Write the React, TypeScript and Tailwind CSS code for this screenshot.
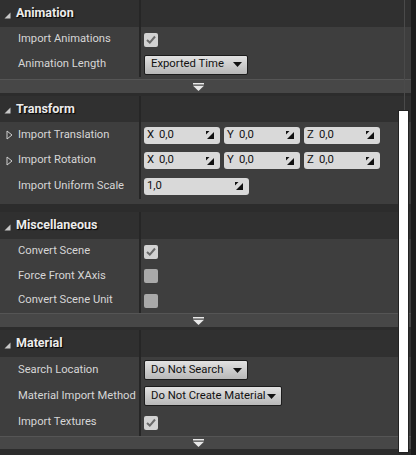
import React from "react";

const FONT = { fontFamily: "Roboto, 'Noto Sans', sans-serif" };

function HeaderTri() {
  return (
    <svg width="7" height="7" viewBox="0 0 7 7" className="shrink-0">
      <polygon points="6.5,0.5 6.5,6.5 0.5,6.5" fill="#c8c8c8" />
    </svg>
  );
}

function HollowTri() {
  return (
    <svg width="7" height="10" viewBox="0 0 7 10" className="shrink-0">
      <polygon points="1,1 6,5 1,9" fill="none" stroke="#cfcfcf" strokeWidth="1" />
    </svg>
  );
}

function DownTri({ color = "#111" }: { color?: string }) {
  return (
    <svg width="9" height="5" viewBox="0 0 9 5" className="shrink-0">
      <polygon points="0,0 9,0 4.5,5" fill={color} />
    </svg>
  );
}

function AdvArrow() {
  return (
    <svg width="11" height="8" viewBox="0 0 11 8">
      <rect x="0" y="0" width="11" height="1.5" fill="#e8e8e8" />
      <polygon points="0,2.8 11,2.8 5.5,8" fill="#e8e8e8" />
    </svg>
  );
}

function Spin() {
  return (
    <svg width="8" height="8" viewBox="0 0 8 8" className="shrink-0">
      <polygon points="8,1 8,8 1,8" fill="#111" />
      <polygon points="0,0 3.5,0 0,3.5" fill="#111" />
    </svg>
  );
}

function Check({ checked }: { checked: boolean }) {
  return (
    <div
      className={
        "w-[14px] h-[14px] rounded-[2px] flex items-center justify-center " +
        (checked ? "bg-[#d2d2d2]" : "bg-[#a9a9a9]")
      }
    >
      {checked && (
        <svg width="10" height="9" viewBox="0 0 10 9">
          <path d="M1 5 L3.8 7.6 L9 1.5" fill="none" stroke="#6a6a6a" strokeWidth="2" />
        </svg>
      )}
    </div>
  );
}

function Dropdown({ text, w }: { text: string; w: string }) {
  return (
    <div
      className={
        w +
        " h-[20px] rounded-[2px] border border-[#1c1c1c] bg-gradient-to-b from-[#e2e2e2] to-[#b8b8b8] flex items-center pl-[6px] pr-[5px] justify-between text-[11.3px] text-[#111]"
      }
    >
      <span className="whitespace-nowrap">{text}</span>
      <DownTri />
    </div>
  );
}

function NumBox({ axis, value, w }: { axis?: string; value: string; w: string }) {
  return (
    <div
      className={
        w +
        " h-[17px] rounded-[3px] bg-[#d9d9d9] flex items-center pl-[3px] pr-[6px] text-[11.3px] text-[#111]"
      }
    >
      {axis && <span className="w-[12px]">{axis}</span>}
      <span className="flex-1">{value}</span>
      <Spin />
    </div>
  );
}

function Header({ title, h }: { title: string; h: string }) {
  return (
    <div className={h + " flex bg-[#303030]"}>
      <div className="w-[141px] border-r-2 border-[#262626] flex items-center pl-[4px] gap-[5px]">
        <div className="pt-[3px]">
          <HeaderTri />
        </div>
        <span
          className="text-[12.5px] font-bold text-[#ececec]"
          style={{ textShadow: "1px 1px 1px #000" }}
        >
          {title}
        </span>
      </div>
      <div className="flex-1" />
    </div>
  );
}

function Row({
  label,
  h,
  expand,
  children,
}: {
  label: string;
  h: string;
  expand?: boolean;
  children?: React.ReactNode;
}) {
  return (
    <div className={h + " flex"}>
      <div className="w-[141px] border-r-2 border-[#262626] flex items-center text-[11.2px] text-[#d6d6d6]">
        <div className="w-[18px] flex justify-center pl-[1px]">{expand && <HollowTri />}</div>
        <span className="whitespace-nowrap">{label}</span>
      </div>
      <div className="flex-1 flex items-center pl-[3px] gap-[4px]">{children}</div>
    </div>
  );
}

function Advanced({ h }: { h: string }) {
  return (
    <div className={h + " bg-[#474747] border-t border-[#555] flex items-center justify-center pr-[14px]"}>
      <AdvArrow />
    </div>
  );
}

export default function App() {
  return (
    <div className="w-[416px] h-[455px] bg-[#2c2c2c] overflow-hidden relative flex" style={FONT}>
      <div className="w-[411px] flex flex-col">
        {/* Animation */}
        <Header title="Animation" h="h-[27px]" />
        <div className="bg-[#3e3e3e] pb-[2px]">
          <Row label="Import Animations" h="h-[25px]">
            <Check checked />
          </Row>
          <Row label="Animation Length" h="h-[25px]">
            <Dropdown text="Exported Time" w="w-[104px]" />
          </Row>
        </div>
        <Advanced h="h-[14px]" />
        <div className="h-[3px]" />

        {/* Transform */}
        <Header title="Transform" h="h-[26px]" />
        <div className="bg-[#3e3e3e] pb-[5px]">
          <Row label="Import Translation" h="h-[26px]" expand>
            <NumBox axis="X" value="0,0" w="w-[76px]" />
            <NumBox axis="Y" value="0,0" w="w-[76px]" />
            <NumBox axis="Z" value="0,0" w="w-[76px]" />
          </Row>
          <Row label="Import Rotation" h="h-[25px]" expand>
            <NumBox axis="X" value="0,0" w="w-[76px]" />
            <NumBox axis="Y" value="0,0" w="w-[76px]" />
            <NumBox axis="Z" value="0,0" w="w-[76px]" />
          </Row>
          <Row label="Import Uniform Scale" h="h-[26px]">
            <NumBox value="1,0" w="w-[105px]" />
          </Row>
        </div>
        <div className="h-[8px]" />

        {/* Miscellaneous */}
        <Header title="Miscellaneous" h="h-[27px]" />
        <div className="bg-[#3e3e3e]">
          <Row label="Convert Scene" h="h-[25px]">
            <Check checked />
          </Row>
          <Row label="Force Front XAxis" h="h-[24px]">
            <Check checked={false} />
          </Row>
          <Row label="Convert Scene Unit" h="h-[25px]">
            <Check checked={false} />
          </Row>
        </div>
        <Advanced h="h-[14px]" />
        <div className="h-[3px]" />

        {/* Material */}
        <Header title="Material" h="h-[27px]" />
        <div className="bg-[#3e3e3e]">
          <Row label="Search Location" h="h-[26px]">
            <Dropdown text="Do Not Search" w="w-[104px]" />
          </Row>
          <Row label="Material Import Method" h="h-[26px]">
            <Dropdown text="Do Not Create Material" w="w-[138px]" />
          </Row>
          <Row label="Import Textures" h="h-[27px]">
            <Check checked />
          </Row>
        </div>
        <Advanced h="h-[13px]" />
      </div>
      <div className="w-[5px] bg-[#1c1c1c]" />
      <div className="absolute left-[404px] top-0 h-[110px] w-px bg-[#4a4a4a]" />
      <div className="absolute left-[398px] top-[110px] w-[11px] h-[343px] bg-white border border-[#222]" />
    </div>
  );
}
